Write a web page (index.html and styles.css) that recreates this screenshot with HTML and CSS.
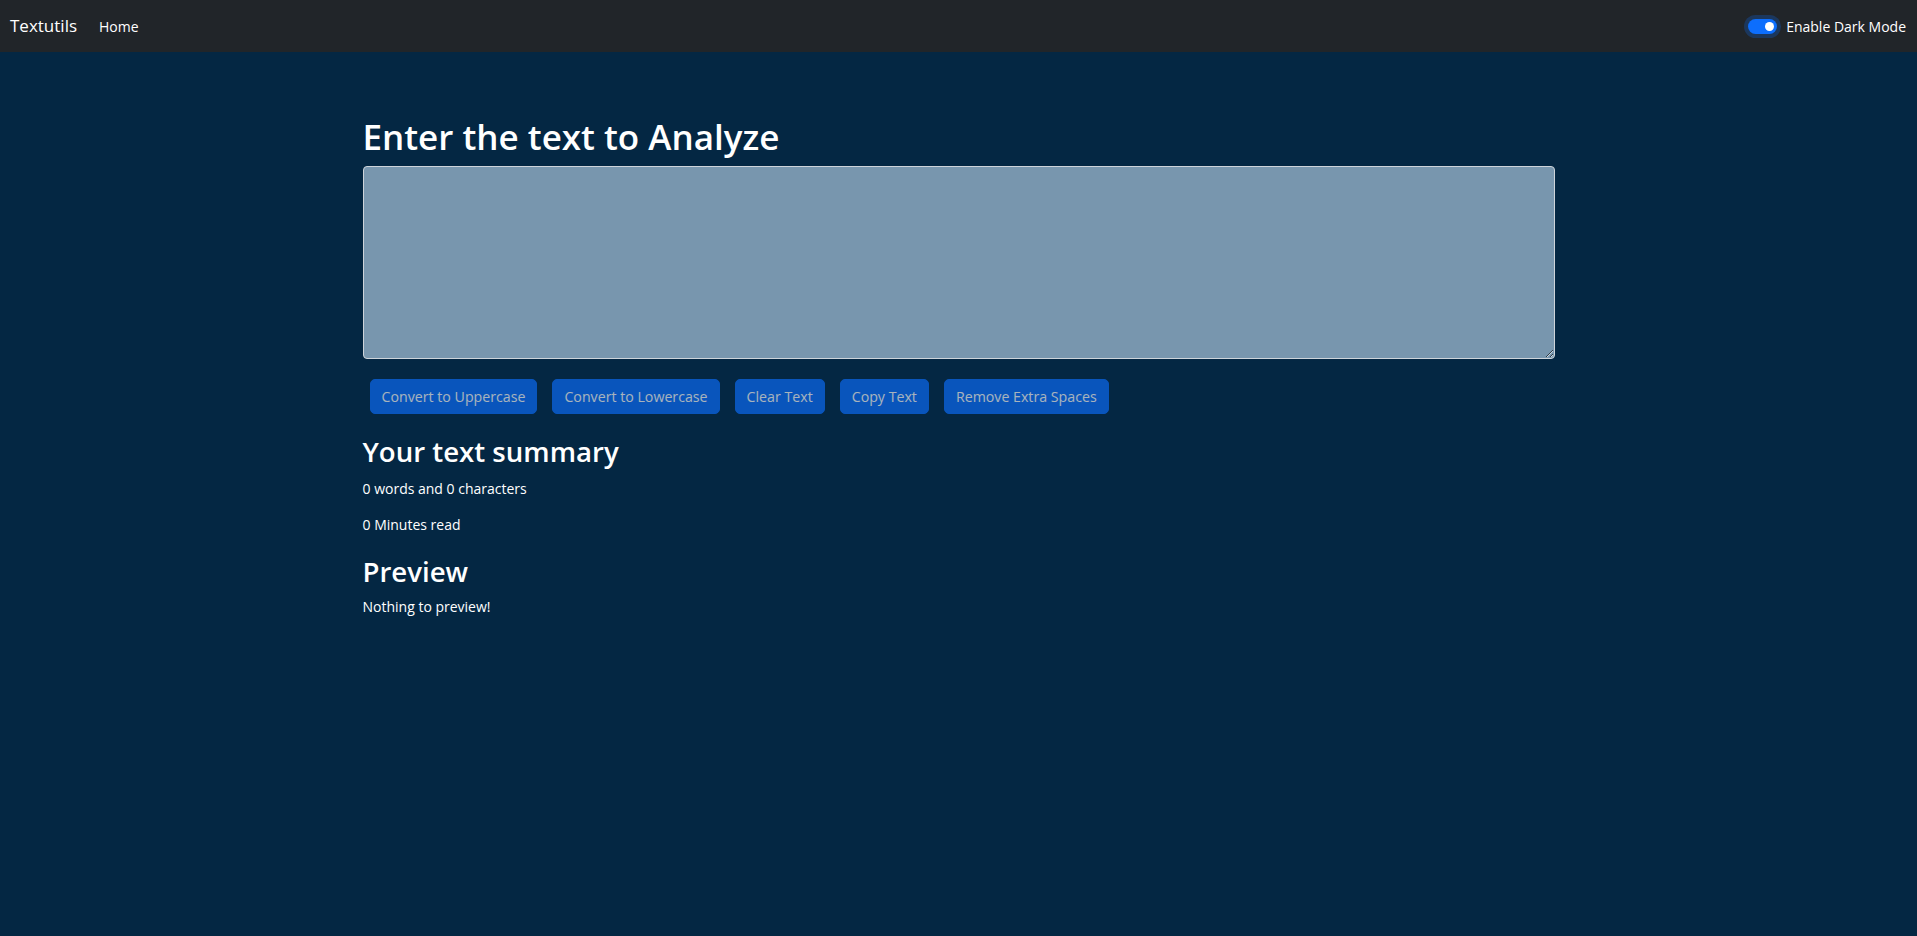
FILE: index.html
```html
<!DOCTYPE html>
<html lang="en">
<head>
<meta charset="utf-8">
<title>Textutils</title>
<link rel="stylesheet" href="styles.css">
</head>
<body>
<nav class="navbar">
  <div class="nav-left">
    <a class="brand" href="#">Textutils</a>
    <a class="nav-link" href="#">Home</a>
  </div>
  <label class="switch">
    <span class="switch-track"><span class="switch-knob"></span></span>
    <span class="switch-label">Enable Dark Mode</span>
  </label>
</nav>
<main class="container">
  <h1 class="title">Enter the text to Analyze</h1>
  <textarea class="text-input" rows="8"></textarea>
  <div class="actions">
    <button class="btn" disabled>Convert to Uppercase</button>
    <button class="btn" disabled>Convert to Lowercase</button>
    <button class="btn" disabled>Clear Text</button>
    <button class="btn" disabled>Copy Text</button>
    <button class="btn" disabled>Remove Extra Spaces</button>
  </div>
  <h2 class="subtitle summary">Your text summary</h2>
  <p class="line">0 words and 0 characters</p>
  <p class="line">0 Minutes read</p>
  <h2 class="subtitle preview">Preview</h2>
  <p class="line">Nothing to preview!</p>
</main>
</body>
</html>
```
FILE: styles.css
```css
* { box-sizing: border-box; }
html, body { margin: 0; padding: 0; }
body {
  background: #042743;
  color: #ffffff;
  font-family: "Open Sans", "Noto Sans", sans-serif;
  font-size: 14px;
  line-height: 1.5;
  min-height: 936px;
}
.navbar {
  height: 52px;
  background: #212529;
  display: flex;
  align-items: center;
  justify-content: space-between;
  padding: 0 11px 0 10px;
}
.nav-left { display: flex; align-items: center; gap: 22px; }
.brand {
  color: #fff;
  text-decoration: none;
  font-size: 17px;
}
.nav-link {
  color: #fff;
  text-decoration: none;
  font-size: 14px;
}
.switch { display: flex; align-items: center; gap: 9px; font-size: 14px; }
.switch-track {
  width: 29px;
  height: 15px;
  border-radius: 8px;
  background: #0d6efd;
  box-shadow: 0 0 0 4px rgba(13, 110, 253, 0.25);
  display: flex;
  align-items: center;
  justify-content: flex-end;
  padding: 0 3px;
}
.switch-knob {
  width: 9px;
  height: 9px;
  border-radius: 50%;
  background: #fff;
}
.container {
  width: 1192px;
  margin: 0 auto;
  padding-top: 64px;
}
.title {
  font-size: 35px;
  font-weight: 600;
  line-height: 1.2;
  margin: 0 0 8px;
}
.text-input {
  display: block;
  width: 100%;
  height: 193px;
  background: #7896ae;
  border: 1px solid #ced4da;
  border-radius: 4px;
  resize: vertical;
  padding: 6px 11px;
  font: inherit;
  color: #fff;
}
.actions {
  display: flex;
  gap: 15px;
  margin: 20px 0 21px 7px;
}
.btn {
  height: 35px;
  padding: 0 11px;
  border: 1px solid #0d6efd;
  border-radius: 5px;
  background: #0d6efd;
  color: #fff;
  font-family: inherit;
  font-size: 14.2px;
  opacity: 0.65;
}
.subtitle {
  font-size: 27.6px;
  font-weight: 600;
  line-height: 1.2;
  margin: 0 0 8px;
}
.subtitle.summary { margin-bottom: 10px; }
.subtitle.preview { margin-top: 20px; }
.line {
  margin: 0 0 15px;
  font-size: 14px;
  line-height: 21px;
}
.line:last-child { margin-bottom: 0; }
```
